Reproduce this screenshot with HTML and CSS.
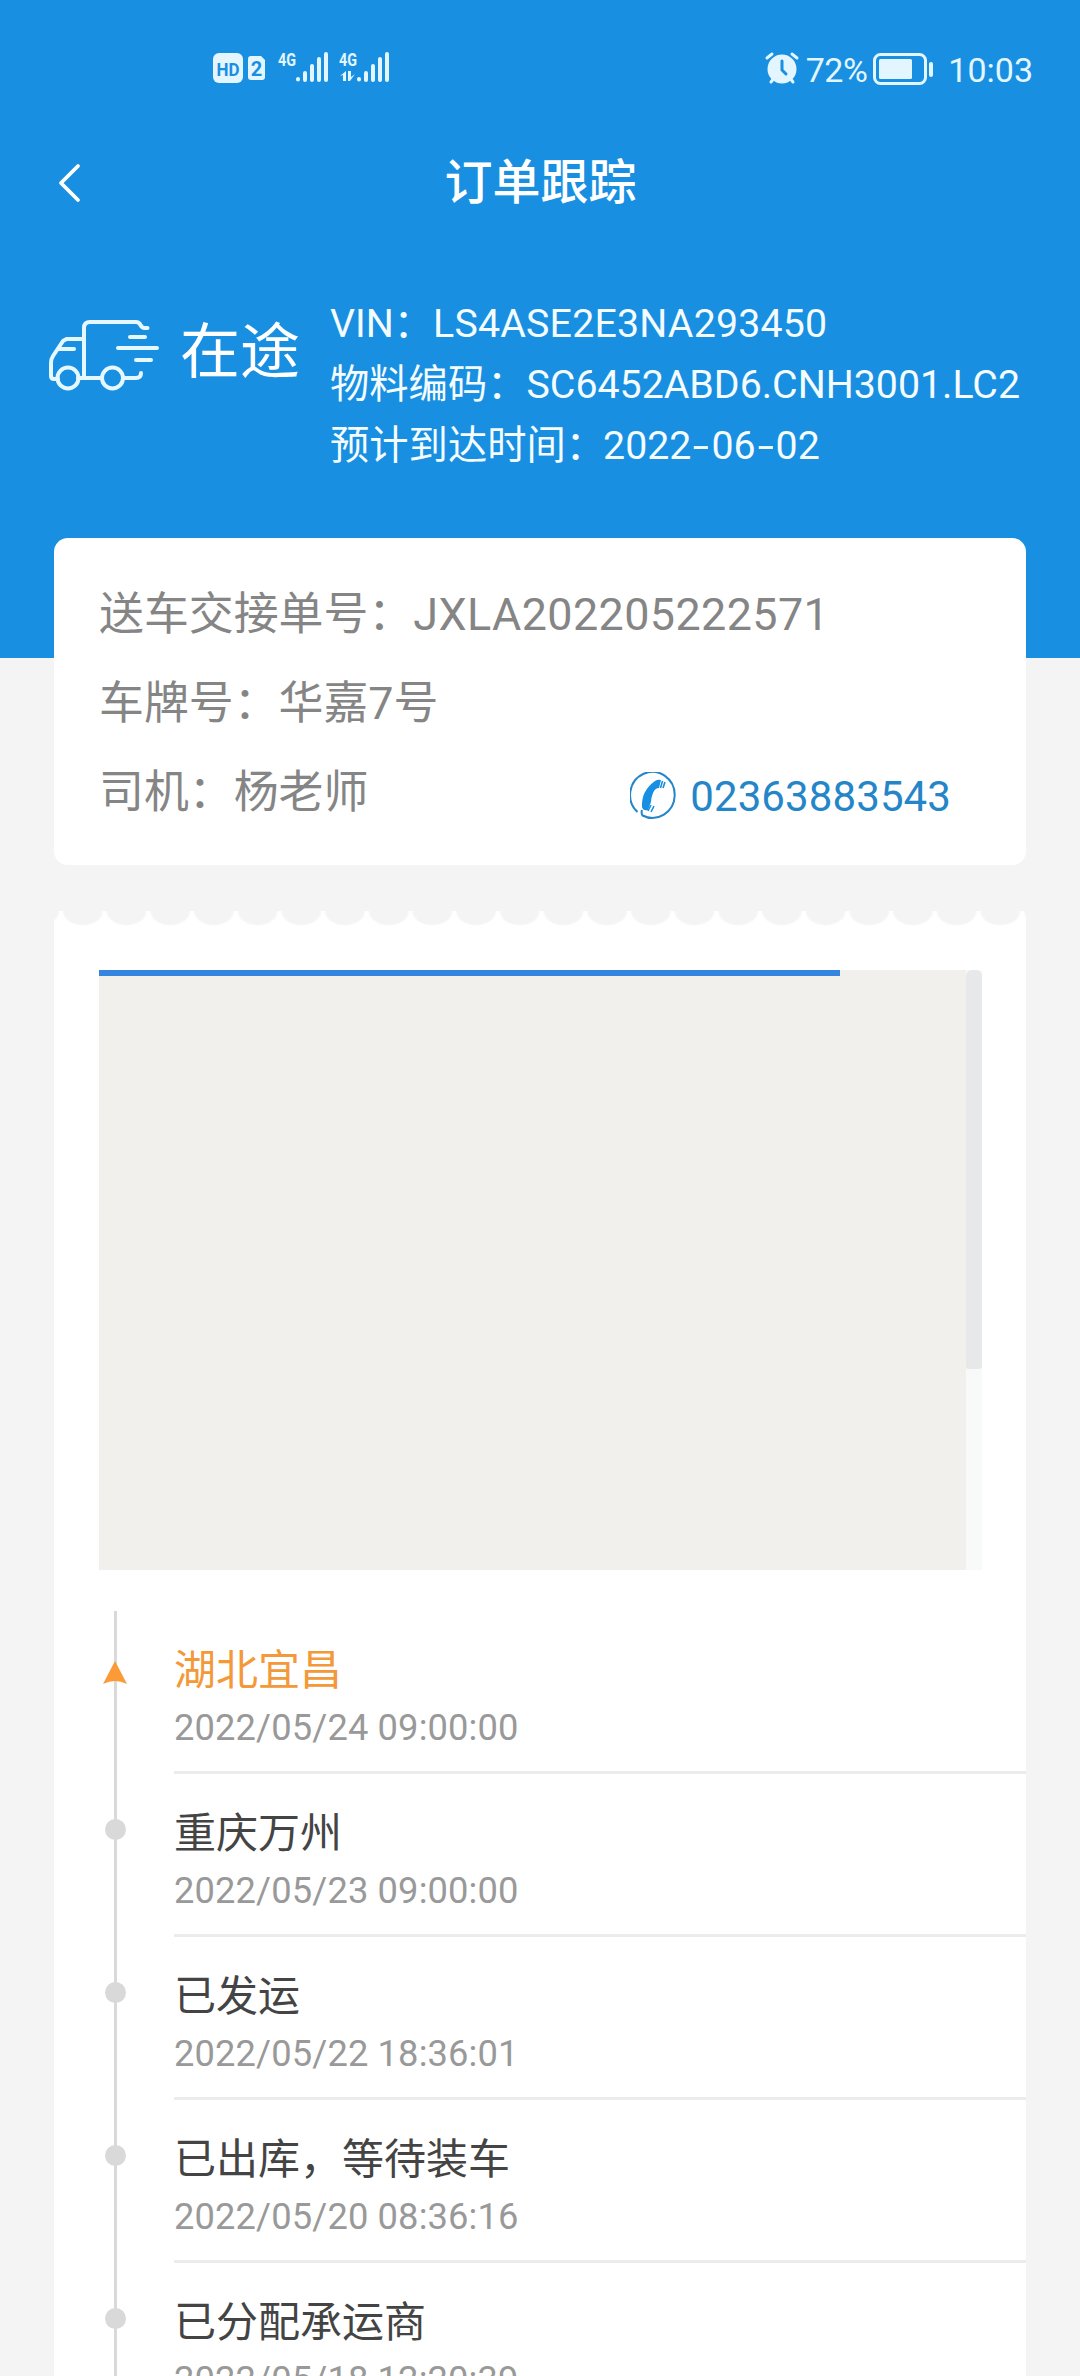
FILE: index.html
```html
<!DOCTYPE html>
<html lang="zh-CN">
<head>
<meta charset="utf-8">
<title>订单跟踪</title>
<link rel="stylesheet" href="styles.css">
</head>
<body>
<div class="screen">
  <header class="header">
    <div class="status-bar">
      <svg class="signals" width="180" height="40" viewBox="0 0 180 40" fill="#e3f6ff">
        <rect x="3" y="4" width="30" height="30" rx="6"/>
        <text class="sig-hd" x="18" y="26.500" text-anchor="middle" textLength="23" lengthAdjust="spacingAndGlyphs">HD</text>
        <path d="M41 7h10l4 4v17a3 3 0 0 1-3 3H41a3 3 0 0 1-3-3V10a3 3 0 0 1 3-3z"/>
        <text class="sig-two" x="46.500" y="26.500" text-anchor="middle">2</text>
        <text class="sig-4g" x="68" y="17" textLength="18" lengthAdjust="spacingAndGlyphs">4G</text>
        <g stroke="#e3f6ff" stroke-width="4" stroke-linecap="round">
          <path d="M88 30v.5M95 24v7M102 17v14M109 10v21M116 5v26"/>
          <path d="M149 30v.5M156 24v7M163 17v14M170 10v21M177 5v26"/>
        </g>
        <text class="sig-4g" x="129" y="17" textLength="18" lengthAdjust="spacingAndGlyphs">4G</text>
        <path d="M130 27l6-5v10h-3v-6zM138 22h3v6l4-3-5 7h-2z"/>
      </svg>
      <div class="status-right">
        <svg class="alarm" width="36" height="36" viewBox="0 0 36 36">
          <circle cx="18" cy="18" r="14.500" fill="#e3f6ff"/>
          <path d="M3 7l5-4M33 7l-5-4M7 31l3-4M29 31l-3-4" stroke="#e3f6ff" stroke-width="3" stroke-linecap="round"/>
          <path d="M18 10v9l4 4" fill="none" stroke="#188fe1" stroke-width="3" stroke-linecap="round"/>
        </svg>
        <span class="battery-text">72%</span>
        <svg class="battery" width="62" height="34" viewBox="0 0 62 34">
          <rect x="1.500" y="2.500" width="51" height="29" rx="6" fill="none" stroke="#e3f6ff" stroke-width="3"/>
          <rect x="6" y="7" width="33" height="20" rx="1.500" fill="#e3f6ff"/>
          <path d="M58 12v11" stroke="#e3f6ff" stroke-width="4" stroke-linecap="round"/>
        </svg>
        <span class="clock">10:03</span>
      </div>
    </div>
    <nav class="nav-bar">
      <svg class="back" width="24" height="40" viewBox="0 0 24 40"><path d="M21 3L4 20l17 17" fill="none" stroke="#fff" stroke-width="3.800" stroke-linecap="round" stroke-linejoin="round"/></svg>
      <h1 class="nav-title">订单跟踪</h1>
    </nav>
    <section class="summary">
      <svg class="truck" width="112" height="72" viewBox="0 0 112 72" fill="none" stroke="#e6f8ff" stroke-width="4" stroke-linecap="round" stroke-linejoin="round">
        <path d="M35 58V8q0-6 6-6h46q3 0 4.500 3t4 3h3M35 19H17.500L14 21 4 36q-2 3-2 7v13q0 3 3 3h4M10 29h15M29 58h24M75 58h12q5 0 5-5M81 17h15M69 28h39M87 40h15"/>
        <circle cx="19" cy="58" r="10.500"/><circle cx="63.500" cy="58" r="10.500"/>
      </svg>
      <strong class="state">在途</strong>
      <dl class="info">
        <div class="info-row"><dt>VIN：</dt><dd class="vin">LS4ASE2E3NA293450</dd></div>
        <div class="info-row"><dt>物料编码：</dt><dd class="material">SC6452ABD6.CNH3001.LC2</dd></div>
        <div class="info-row"><dt>预计到达时间：</dt><dd class="eta">2022<i class="dash">-</i>06<i class="dash">-</i>02</dd></div>
      </dl>
    </section>
  </header>

  <main class="content">
    <section class="card">
      <div class="card-row">送车交接单号：<span class="serial">JXLA202205222571</span></div>
      <div class="card-row">车牌号：华嘉7号</div>
      <div class="card-row">司机：杨老师
        <a class="phone">
          <svg width="48" height="50" viewBox="0 0 48 50">
            <path d="M7.500 40A22.300 23 0 1 1 12.500 43.500Q11 41 12 38" fill="none" stroke="#2486c8" stroke-width="2"/>
            <path d="M25 9q3-2 6-1l-2 8q-4 0-6 5t-2 9l-3 8q-5 1-6-3-1-16 13-26z" fill="#188fe1"/>
            <path d="M32.500 9l-2 7M35 10l-2 6M21 33l-3 6M24 34l-3 6" stroke="#188fe1" stroke-width="1.600"/>
          </svg>
          <span>02363883543</span>
        </a>
      </div>
    </section>

    <section class="ticket">
      <div class="map">
        <div class="map-canvas"><div class="progress"></div></div>
        <div class="track"><div class="thumb"></div></div>
      </div>
      <ol class="timeline">
        <li class="event current"><span class="rail"><svg class="arrow" width="26" height="26" viewBox="0 0 26 26"><path d="M13 1l12 23q-12-6-24 0z" fill="#fb9a36"/></svg></span><div class="event-body"><h2>湖北宜昌</h2><time>2022/05/24 09:00:00</time></div></li>
        <li class="event"><span class="rail"><i class="dot"></i></span><div class="event-body"><h2>重庆万州</h2><time>2022/05/23 09:00:00</time></div></li>
        <li class="event"><span class="rail"><i class="dot"></i></span><div class="event-body"><h2>已发运</h2><time>2022/05/22 18:36:01</time></div></li>
        <li class="event"><span class="rail"><i class="dot"></i></span><div class="event-body"><h2>已出库，等待装车</h2><time>2022/05/20 08:36:16</time></div></li>
        <li class="event"><span class="rail"><i class="dot"></i></span><div class="event-body"><h2>已分配承运商</h2><time>2022/05/18 12:20:39</time></div></li>
      </ol>
    </section>
  </main>
</div>
</body>
</html>
```
FILE: styles.css
```css
* { box-sizing: border-box; margin: 0; padding: 0; }
body { background: #f4f4f4; font-family: Roboto, "Noto Sans CJK SC", sans-serif; }
.screen { width: 1080px; height: 2376px; overflow: hidden; background: #f4f4f4; }

.header { height: 658px; background: #188fe1; color: #f4fcff; }
.status-bar { display: flex; justify-content: space-between; align-items: center; height: 140px; padding: 0 47px 0 210px; color: #e3f6ff; font-size: 34px; line-height: 40px; }
.signals { margin-bottom: 2px; }
.sig-hd { font-size: 19px; font-weight: 700; fill: #188fe1; }
.sig-two { font-size: 20px; font-weight: 700; fill: #188fe1; }
.sig-4g { font-size: 19px; font-weight: 700; }
.status-right { display: flex; align-items: center; }
.alarm { margin: 0 6px 3px 0; }
.battery { margin: 0 13px 3px 6px; }
.battery-text { letter-spacing: -.5px; }

.nav-bar { display: flex; align-items: center; height: 84px; padding: 2px 56px 0 57px; }
.nav-title { flex: 1; margin-right: 24px; text-align: center; font-size: 48px; line-height: 72px; font-weight: 500; color: #fff; }

.summary { display: flex; align-items: flex-start; padding: 69px 0 0 49px; }
.truck { margin-top: 27px; }
.state { margin: 16px 0 0 19px; width: 150px; font-size: 60px; line-height: 88px; font-weight: 400; color: #fff; }
.info-row { display: flex; height: 61px; line-height: 63px; font-size: 39.300px; white-space: nowrap; }
.vin { letter-spacing: .2px; }
.eta { margin-left: -2px; }
.dash { display: inline-block; width: 20px; text-align: center; font-style: normal; transform: scaleX(1.500); }

.content { margin-top: -120px; padding: 0 54px; }
.card { height: 327px; padding: 32px 45px 28px; border-radius: 14px; background: #fff; color: #858585; font-size: 44.900px; }
.card-row { display: flex; align-items: center; height: 89px; line-height: 66px; white-space: nowrap; }
.serial { letter-spacing: .4px; }
.phone { display: flex; align-items: center; gap: 12px; margin: 8px 30px 0 auto; color: #2486c8; font-size: 42px; letter-spacing: .1px; }

.ticket { margin-top: 46px; padding-top: 59px; min-height: 1480px; background: radial-gradient(ellipse 21px 15px at 50% 0, #f4f4f4 88%, #fff 100%) 7px 0 / 43.700px 16px repeat-x, #fff; }
.map { display: flex; width: 883px; height: 600px; margin-left: 45px; }
.map-canvas { width: 867px; background: #f1f0ec; }
.progress { width: 741px; height: 6px; background: #3485e0; }
.track { width: 16px; background: #f8f9f9; }
.thumb { height: 399px; border-radius: 6px 6px 3px 3px; background: #e7e8ea; }

.timeline { margin-top: 41px; padding-left: 45px; list-style: none; }
.event { display: flex; height: 163px; }
.rail { display: flex; justify-content: center; align-items: flex-start; width: 33px; background: linear-gradient(#d9d9d9, #d9d9d9) center / 3px 100% no-repeat; }
.dot { width: 21px; height: 21px; margin-top: 45px; border-radius: 50%; background: #d9d9d9; }
.arrow { margin: 49px 2px 0 0; flex: none; }
.event-body { flex: 1; margin-left: 42px; padding: 28px 0 0 0; border-bottom: 3px solid #ececec; }
.event-body h2 { font-size: 42px; line-height: 64px; font-weight: 400; color: #444; }
.current h2 { color: #f3993a; }
.event-body time { display: block; font-size: 36.300px; line-height: 49px; letter-spacing: .13px; color: #999; }
```
